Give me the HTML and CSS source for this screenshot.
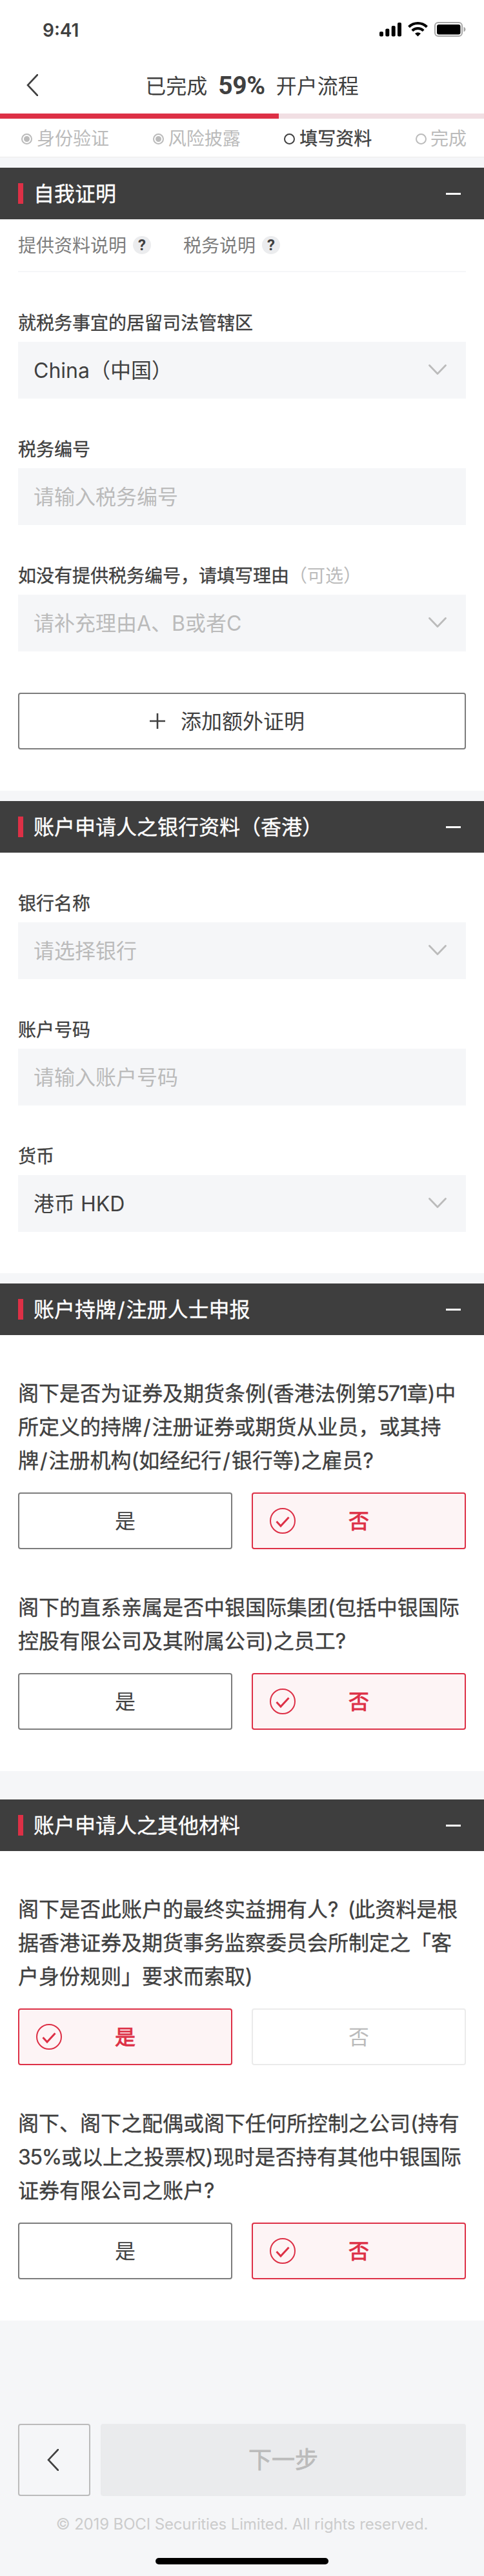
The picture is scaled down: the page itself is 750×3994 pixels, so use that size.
FILE: index.html
```html
<!DOCTYPE html>
<html lang="zh-CN">
<head>
<meta charset="utf-8">
<title>开户流程</title>
<link rel="stylesheet" href="styles.css">
</head>
<body>
<svg class="defs" width="0" height="0">
  <symbol id="check" viewBox="0 0 40 40"><circle cx="20" cy="20" r="19" fill="none" stroke="currentColor" stroke-width="2"/><path d="M10.500 21L17 28L29.500 14.500" fill="none" stroke="currentColor" stroke-width="3"/></symbol>
  <symbol id="down" viewBox="0 0 28 16"><path d="M1.500 1.500L14 14.500L26.500 1.500" fill="none" stroke="currentColor" stroke-width="2.800" stroke-linecap="round" stroke-linejoin="round"/></symbol>
  <symbol id="back" viewBox="0 0 18 34"><path d="M17 1L2 17L17 33" fill="none" stroke="currentColor" stroke-width="2.600" stroke-linecap="round"/></symbol>
</svg>
<header class="top">
  <div class="status">
    <span class="time">9:41</span>
    <svg class="status-icons" width="134" height="24" viewBox="0 0 134 24">
      <rect x="0" y="15" width="6" height="7.500" rx="2"/><rect x="9.300" y="10.500" width="6" height="12" rx="2"/><rect x="18.700" y="6" width="6" height="16.500" rx="2"/><rect x="28" y="1" width="6" height="21.500" rx="2"/>
      <g fill="none" stroke="#000" stroke-width="4"><path d="M45.500 7.800a20 20 0 0 1 28 0"/><path d="M50.800 13.600a12.500 12.500 0 0 1 17.400 0"/></g><path d="M59.500 22.500l-4.500-4.500a7 7 0 0 1 9 0z"/>
      <rect x="86" y="1" width="42" height="21" rx="5" fill="none" stroke="#a6a6a6" stroke-width="2"/><rect x="89" y="4" width="36.500" height="15.500" rx="3"/><path d="M130.500 7.500q3 1.500 3 4t-3 4z" fill="#a6a6a6"/>
    </svg>
  </div>
  <nav class="nav">
    <svg class="nav-back" width="18" height="34"><use href="#back"/></svg>
    <h1 class="nav-title">已完成<b>59%</b>开户流程</h1>
  </nav>
  <div class="progress"><div class="progress-done"></div></div>
  <div class="steps">
    <span class="step"><i class="dot dot-done"></i>身份验证</span>
    <span class="step"><i class="dot dot-done"></i>风险披露</span>
    <span class="step step-now"><i class="dot"></i>填写资料</span>
    <span class="step"><i class="dot"></i>完成</span>
  </div>
</header>

<section class="section">
  <h2 class="section-head"><span>自我证明</span><i class="minus"></i></h2>
  <div class="body">
    <div class="help"><span>提供资料说明</span><i class="q">?</i><span class="help-next">税务说明</span><i class="q">?</i></div>
    <div class="fields">
      <div class="label">就税务事宜的居留司法管辖区</div>
      <div class="field"><span>China（中国）</span><svg class="down"><use href="#down"/></svg></div>
      <div class="label">税务编号</div>
      <div class="field hint"><span>请输入税务编号</span></div>
      <div class="label">如没有提供税务编号，请填写理由<span class="optional">（可选）</span></div>
      <div class="field hint"><span>请补充理由A、B或者C</span><svg class="down"><use href="#down"/></svg></div>
    </div>
    <div class="add"><svg width="24" height="24" viewBox="0 0 24 24"><path d="M12 0v24M0 12h24" stroke="#404040" stroke-width="2.600"/></svg><span>添加额外证明</span></div>
  </div>
</section>

<section class="section">
  <h2 class="section-head"><span>账户申请人之银行资料（香港）</span><i class="minus"></i></h2>
  <div class="body">
    <div class="fields">
      <div class="label">银行名称</div>
      <div class="field hint"><span>请选择银行</span><svg class="down"><use href="#down"/></svg></div>
      <div class="label">账户号码</div>
      <div class="field hint"><span>请输入账户号码</span></div>
      <div class="label">货币</div>
      <div class="field"><span>港币 HKD</span><svg class="down"><use href="#down"/></svg></div>
    </div>
  </div>
</section>

<section class="section">
  <h2 class="section-head"><span>账户持牌<i class="slash">/</i>注册人士申报</span><i class="minus"></i></h2>
  <div class="body">
    <p class="question">阁下是否为证券及期货条例(香港法例第<span class="tight">571</span>章)中<br>所定义的持牌<i class="slash">/</i>注册证券或期货从业员，或其持<br>牌<i class="slash">/</i>注册机构(如经纪行<i class="slash">/</i>银行等)之雇员?</p>
    <div class="choices"><div class="choice"><span>是</span></div><div class="choice chosen"><svg class="check"><use href="#check"/></svg><span>否</span></div></div>
    <p class="question">阁下的直系亲属是否中银国际集团(包括中银国际<br>控股有限公司及其附属公司)之员工?</p>
    <div class="choices"><div class="choice"><span>是</span></div><div class="choice chosen"><svg class="check"><use href="#check"/></svg><span>否</span></div></div>
  </div>
</section>

<section class="section section-last">
  <h2 class="section-head"><span>账户申请人之其他材料</span><i class="minus"></i></h2>
  <div class="body">
    <p class="question">阁下是否此账户的最终实益拥有人<span class="tight">?&nbsp; (</span>此资料是根<br>据香港证券及期货事务监察委员会所制定之「客<br>户身份规则」要求而索取)</p>
    <div class="choices"><div class="choice chosen"><svg class="check"><use href="#check"/></svg><span>是</span></div><div class="choice muted"><span>否</span></div></div>
    <p class="question">阁下、阁下之配偶或阁下任何所控制之公司(持有<br><span class="tight">35%</span>或以上之投票权)现时是否持有其他中银国际<br>证券有限公司之账户?</p>
    <div class="choices"><div class="choice"><span>是</span></div><div class="choice chosen"><svg class="check"><use href="#check"/></svg><span>否</span></div></div>
  </div>
</section>

<footer class="footer">
  <div class="actions">
    <div class="prev"><svg width="18" height="34"><use href="#back"/></svg></div>
    <div class="next">下一步</div>
  </div>
  <div class="copyright">© 2019 BOCI Securities Limited. All rights reserved.</div>
  <div class="home"></div>
</footer>
</body>
</html>
```
FILE: styles.css
```css
* { box-sizing: border-box; }
body {
  margin: 0;
  width: 750px;
  height: 3994px;
  background: #f5f6f8;
  color: #404040;
  font: 400 32px/44px Inter, "Noto Sans CJK SC", sans-serif;
}
h1, h2, p { margin: 0; font-weight: 400; }
i { font-style: normal; }
.defs { position: absolute; }
.top { background: #fff; border-bottom: 1px solid #ebebeb; height: 244px; }
.status { height: 88px; padding: 34px 28px 0 66px; display: flex; justify-content: space-between; align-items: flex-start; }
.time { font-size: 28px; line-height: 26px; font-weight: 600; }
.nav { height: 88px; padding: 0 41px; display: flex; align-items: center; }
.nav-title { flex: 1; margin-left: 13px; padding-top: 3px; font-size: 32px; display: flex; justify-content: center; align-items: center; }
.nav-title b { font: 700 39px/44px Roboto, sans-serif; margin: 0 17px 2px; letter-spacing: -0.3px; }
.progress { height: 8px; background: #f1dfe3; }
.progress-done { width: 432px; height: 8px; background: #dd3046; }
.steps { height: 59px; padding: 3px 27px 0 33px; display: flex; justify-content: space-between; align-items: center; font-size: 28px; color: #bbb; }
.step { display: flex; align-items: center; gap: 7px; }
.step:last-child { gap: 6px; }
.step-now { color: #404040; -webkit-text-stroke: 0.35px; }
.dot { width: 17px; height: 17px; border: 2px solid; border-radius: 50%; padding: 2px; }
.dot-done::before { content: ""; display: block; width: 9px; height: 9px; border-radius: 50%; background: currentColor; }

.section { margin-top: 16px; }
.section-last { margin-top: 44px; }
.section-head { height: 80px; background: #3e3e3e; color: #fff; display: flex; align-items: center; padding: 0 36px 0 28px; font-size: 32px; -webkit-text-stroke: 0.35px; }
.section-head span { padding-top: 2px; }
.section-head::before { content: ""; width: 8px; height: 32px; background: #dd3046; margin-right: 16px; }
.minus { width: 23px; height: 3px; background: #fff; margin-left: auto; }
.body { background: #fff; padding: 0 28px 64px; }
.help { height: 82px; border-bottom: 2px solid #f5f6f8; display: flex; align-items: center; font-size: 28px; color: #7d7d7d; }
.help span { padding-top: 2px; }
.help-next { margin-left: 50px; }
.q { width: 28px; height: 28px; margin-left: 10px; border-radius: 50%; background: #ebecee; color: #404040; font: 700 24px/28px Roboto, sans-serif; text-align: center; }
.fields { padding-top: 58px; }
.label { height: 50px; line-height: 42px; font-size: 28px; -webkit-text-stroke: 0.35px; }
.optional { color: #bbb; -webkit-text-stroke: 0; }
.field { height: 88px; margin-bottom: 58px; padding: 0 30px 0 24px; background: #f5f6f8; display: flex; align-items: center; }
.field span { padding-top: 2px; }
.field:last-child { margin-bottom: 0; }
.hint { color: #bbb; }
.down { width: 28px; height: 16px; margin: 0 0 2px auto; color: #bbb; }
.add { margin-top: 64px; height: 88px; border: 2px solid #7c7c7c; border-radius: 4px; display: flex; align-items: center; gap: 24px; padding: 0 0 0 202px; }
.add span { padding-top: 2px; }
.question { padding-top: 65px; margin-bottom: -1px; font-size: 32px; line-height: 52px; white-space: nowrap; -webkit-text-stroke: 0.35px; }
.tight { letter-spacing: -1.2px; }
.slash { padding: 0 2px; }
.choices { margin-top: 24px; display: grid; grid-template-columns: 332px 332px; gap: 30px; }
.choice { position: relative; height: 88px; border: 2px solid #7c7c7c; border-radius: 4px; display: flex; align-items: center; justify-content: center; }
.choice span { padding-top: 2px; }
.chosen { border-color: #dd3046; background: #fdf4f5; color: #dd3046; -webkit-text-stroke: 0.9px; }
.muted { border-color: #ebebeb; color: #bbb; }
.check { position: absolute; left: 26px; top: 22px; width: 40px; height: 40px; }

.footer { padding: 160px 28px 0; }
.actions { display: flex; gap: 16px; }
.prev { width: 112px; height: 112px; border: 2px solid #bbb; border-radius: 4px; display: flex; align-items: center; padding-left: 43px; }
.next { flex: 1; height: 112px; border-radius: 4px; background: #eaebed; color: #bbb; font-size: 36px; -webkit-text-stroke: 0.8px; display: flex; align-items: center; justify-content: center; }
.copyright { margin-top: 27px; text-align: center; font-size: 24px; line-height: 34px; letter-spacing: -0.14px; color: #ccc; white-space: nowrap; }
.home { width: 268px; height: 10px; margin: 35px auto 0; border-radius: 5px; background: #000; }
```
